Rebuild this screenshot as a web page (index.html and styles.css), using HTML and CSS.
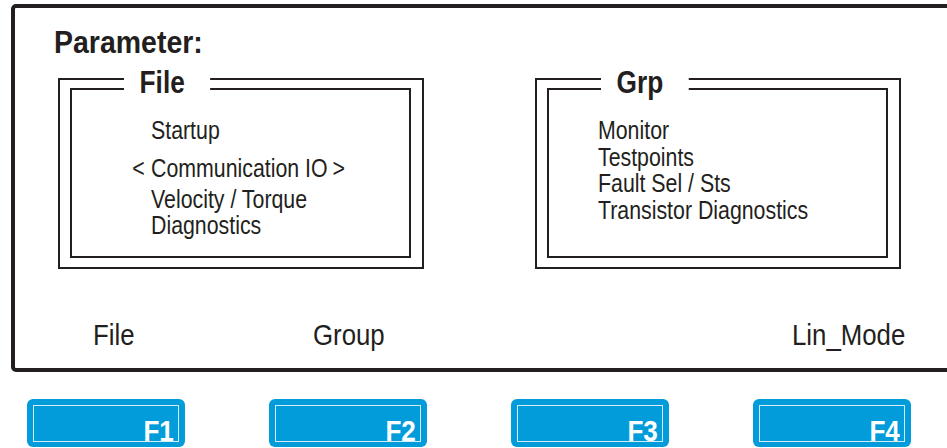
FILE: index.html
```html
<!DOCTYPE html>
<html lang="en">
<head>
    <meta charset="UTF-8">
    <title>Parameter: File / Grp</title>
    <link rel="stylesheet" href="styles.css">
</head>
<body>
    <div class="screen">
        <div class="heading">Parameter:</div>

        <div class="boxes">
            <div class="box">
                <div class="box-title">File</div>
                <div class="box-inner">
                    <ul class="list list-file">
                        <li class="item">Startup</li>
                        <li class="item selected"><span class="arrow">&lt;</span>Communication IO<span class="arrow-right">&gt;</span></li>
                        <li class="item">Velocity / Torque</li>
                        <li class="item">Diagnostics</li>
                    </ul>
                </div>
            </div>

            <div class="box">
                <div class="box-title">Grp</div>
                <div class="box-inner">
                    <ul class="list list-grp">
                        <li class="item">Monitor</li>
                        <li class="item">Testpoints</li>
                        <li class="item">Fault Sel / Sts</li>
                        <li class="item">Transistor Diagnostics</li>
                    </ul>
                </div>
            </div>
        </div>

        <div class="softkeys">
            <span class="softkey">File</span>
            <span class="softkey">Group</span>
            <span class="softkey">Lin_Mode</span>
        </div>
    </div>

    <div class="fkeys">
        <div class="fkey"><div class="fkey-inner"><span class="fkey-label">F1</span></div></div>
        <div class="fkey"><div class="fkey-inner"><span class="fkey-label">F2</span></div></div>
        <div class="fkey"><div class="fkey-inner"><span class="fkey-label">F3</span></div></div>
        <div class="fkey"><div class="fkey-inner"><span class="fkey-label">F4</span></div></div>
    </div>
</body>
</html>
```

FILE: styles.css
```css
body, html {
    margin: 0;
    padding: 0;
    overflow: hidden;
    background: #fff;
    color: #231f20;
    font-family: 'Liberation Sans', Arial, sans-serif;
}

/* no narrow face installed, so squeeze the regular one */
.heading,
.box-title,
.item,
.softkey {
    transform: scaleX(0.82);
    transform-origin: left center;
}

/* display frame, runs off the right edge */
.screen {
    box-sizing: border-box;
    width: 960px;
    height: 368px;
    margin: 4px 0 0 11px;
    border: 4px solid #231f20;
    border-radius: 5px;
    padding-top: 18px;
    display: flex;
    flex-direction: column;
}

.heading {
    font-size: 32px;
    font-weight: bold;
    line-height: 32px;
    margin-left: 39px;
    transform: scaleX(0.89);
}

.boxes {
    display: flex;
    gap: 111px;
    margin-top: 20px;
    padding-left: 43px;
}

.box {
    position: relative;
    box-sizing: border-box;
    width: 366px;
    height: 191px;
    border: 2px solid #231f20;
    padding: 8px 11px 9px 10px;
}

.box-inner {
    box-sizing: border-box;
    height: 100%;
    border: 2px solid #231f20;
}

.box-title {
    position: absolute;
    top: -14px;
    left: 64px;
    padding: 0 31px 0 19px;
    background: #fff;
    font-size: 32px;
    font-weight: bold;
    line-height: 32px;
}

.list {
    list-style: none;
    margin: 0;
    font-size: 26px;
    line-height: 26px;
}

.list-file {
    padding: 27px 0 0 79px;
}

.list-grp {
    padding: 27px 0 0 49px;
    line-height: 26.6px;
}

.item.selected {
    margin: 12px 0 5px;
}

.arrow {
    display: inline-block;
    width: 23px;
    margin-left: -23px;
}

.arrow-right {
    margin-left: 6px;
}

.softkeys {
    display: grid;
    grid-template-columns: 220px 479px auto;
    margin-top: auto;
    padding: 0 0 18px 78px;
    font-size: 30px;
    line-height: 30px;
}

.softkey {
    display: inline-block;
    transform: scaleX(0.86);
}

/* blue function keys */
.fkeys {
    display: flex;
    gap: 84px;
    margin-top: 27px;
    padding-left: 27px;
}

.fkey {
    box-sizing: border-box;
    width: 158px;
    height: 48px;
    padding: 6px 6px 5px;
    background: #029cdb;
    border-radius: 6px;
}

.fkey-inner {
    box-sizing: border-box;
    height: 100%;
    border: 1px solid #d4ecf8;
    display: flex;
    justify-content: flex-end;
    align-items: flex-end;
    padding-right: 4px;
    color: #fff;
    font-size: 29px;
    font-weight: bold;
    line-height: 20px;
}

.fkey-label {
    display: inline-block;
    transform: scaleX(0.9);
    transform-origin: right bottom;
}
```
